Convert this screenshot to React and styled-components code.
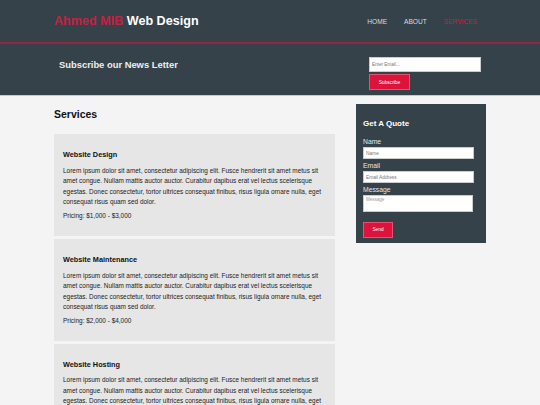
import React from "react";
import styled, { createGlobalStyle } from "styled-components";

const colors = {
  dark: "#35424a",
  red: "#dc143c",
  redText: "#c8203f",
  light: "#f4f4f4",
  card: "#e6e6e6",
};

const GlobalStyle = createGlobalStyle`
  * { box-sizing: border-box; }
  body {
    margin: 0;
    background: ${colors.light};
    font-family: "Liberation Sans", Arial, sans-serif;
    color: #222;
  }
`;

const Container = styled.div`
  width: 432px;
  margin: 0 auto;
`;

const Header = styled.header`
  background: ${colors.dark};
  border-bottom: 2px solid #9a2443;
  height: 44px;
`;

const HeaderInner = styled(Container)`
  display: flex;
  align-items: center;
  justify-content: space-between;
  height: 42px;
`;

const Logo = styled.h1`
  margin: 0;
  font-size: 12.6px;
  font-weight: bold;
  color: #fff;
  span {
    color: ${colors.redText};
  }
`;

const Nav = styled.ul`
  display: flex;
  list-style: none;
  margin: 0;
  padding: 0 0.5px 0 0;
`;

const NavItem = styled.li`
  padding: 0 8.5px;
  font-size: 6.6px;
  text-transform: uppercase;
  color: ${(p) => (p.$current ? colors.redText : "#ddd")};
`;

const Newsletter = styled.section`
  background: ${colors.dark};
  border-bottom: 1px solid #c8c8c8;
  height: 52px;
`;

const NewsletterInner = styled(Container)`
  display: flex;
  justify-content: space-between;
  padding: 13px 5px 0;
`;

const NewsTitle = styled.h2`
  margin: 1.5px 0 0;
  font-size: 9.4px;
  line-height: 12px;
  color: #eee;
`;

const NewsForm = styled.form`
  display: flex;
  flex-direction: column;
  align-items: flex-start;
  gap: 2px;
`;

const NewsInput = styled.input`
  width: 112px;
  height: 15px;
  padding: 0 2px;
  border: 1px solid #ccc;
  font-family: inherit;
  font-size: 4.6px;
  &::placeholder {
    color: #777;
  }
`;

const RedButton = styled.button`
  height: ${(p) => p.$h}px;
  width: ${(p) => p.$w}px;
  padding: 0;
  background: ${colors.red};
  color: #fff;
  border: 1px solid #e8506e;
  font-family: inherit;
  font-size: 4.8px;
`;

const Main = styled(Container)`
  display: flex;
  justify-content: space-between;
  align-items: flex-start;
`;

const MainCol = styled.article`
  width: 281px;
`;

const PageTitle = styled.h1`
  margin: 0;
  padding: 9px 0 0;
  font-size: 10.5px;
  line-height: 18px;
  height: 38px;
  color: #111;
`;

const ServiceList = styled.ul`
  list-style: none;
  margin: 0;
  padding: 0;
`;

const Service = styled.li`
  background: ${colors.card};
  padding: 16px 9px 15px;
  margin-bottom: 2.5px;
`;

const ServiceTitle = styled.h3`
  margin: 0 0 5.75px;
  font-size: 7.3px;
  line-height: 10px;
  color: #111;
`;

const Para = styled.p`
  margin: 0 0 ${(p) => p.$mb || 0}px;
  font-size: 6.45px;
  line-height: 10.5px;
  color: #222;
`;

const Sidebar = styled.aside`
  width: 130px;
  margin-top: 8px;
  background: ${colors.dark};
  padding: 14px 7px 5px;
  color: #fff;
`;

const SideTitle = styled.h3`
  margin: 0 0 7px;
  font-size: 8px;
  line-height: 12px;
  color: #fff;
`;

const Label = styled.label`
  display: block;
  font-size: 6.8px;
  line-height: 9px;
  color: #e6e6e6;
`;

const Field = styled.input`
  display: block;
  width: 111px;
  height: 12px;
  margin: 1px 0 2px;
  padding: 0 2px;
  border: 1px solid #ccc;
  font-family: inherit;
  font-size: 4.8px;
  &::placeholder {
    color: #777;
  }
`;

const Area = styled.textarea`
  display: block;
  width: 110px;
  height: 17px;
  margin: 1px 0 5px;
  padding: 1px 2px;
  border: 1px solid #ccc;
  font-family: inherit;
  font-size: 4.5px;
  resize: none;
  &::placeholder {
    color: #999;
  }
`;

const lorem =
  "Lorem ipsum dolor sit amet, consectetur adipiscing elit. Fusce hendrerit sit amet metus sit amet congue. Nullam mattis auctor auctor. Curabitur dapibus erat vel lectus scelerisque egestas. Donec consectetur, tortor ultrices consequat finibus, risus ligula ornare nulla, eget consequat risus quam sed dolor.";

const services = [
  { title: "Website Design", price: "Pricing: $1,000 - $3,000" },
  { title: "Website Maintenance", price: "Pricing: $2,000 - $4,000" },
  { title: "Website Hosting", price: "Pricing: $500 per month" },
];

export default function App() {
  return (
    <>
      <GlobalStyle />
      <Header>
        <HeaderInner>
          <Logo>
            <span>Ahmed MIB</span> Web Design
          </Logo>
          <Nav>
            <NavItem>Home</NavItem>
            <NavItem>About</NavItem>
            <NavItem $current>Services</NavItem>
          </Nav>
        </HeaderInner>
      </Header>
      <Newsletter>
        <NewsletterInner>
          <NewsTitle>Subscribe our News Letter</NewsTitle>
          <NewsForm onSubmit={(e) => e.preventDefault()}>
            <NewsInput type="email" placeholder="Enter Email..." />
            <RedButton type="submit" $w={41} $h={16}>
              Subscribe
            </RedButton>
          </NewsForm>
        </NewsletterInner>
      </Newsletter>
      <Main>
        <MainCol>
          <PageTitle>Services</PageTitle>
          <ServiceList>
            {services.map((s) => (
              <Service key={s.title}>
                <ServiceTitle>{s.title}</ServiceTitle>
                <Para $mb={3}>{lorem}</Para>
                <Para>{s.price}</Para>
              </Service>
            ))}
          </ServiceList>
        </MainCol>
        <Sidebar>
          <SideTitle>Get A Quote</SideTitle>
          <form onSubmit={(e) => e.preventDefault()}>
            <Label>Name</Label>
            <Field type="text" placeholder="Name" />
            <Label>Email</Label>
            <Field type="email" placeholder="Email Address" />
            <Label>Message</Label>
            <Area placeholder="Message" />
            <RedButton type="submit" $w={30} $h={16}>
              Send
            </RedButton>
          </form>
        </Sidebar>
      </Main>
    </>
  );
}
